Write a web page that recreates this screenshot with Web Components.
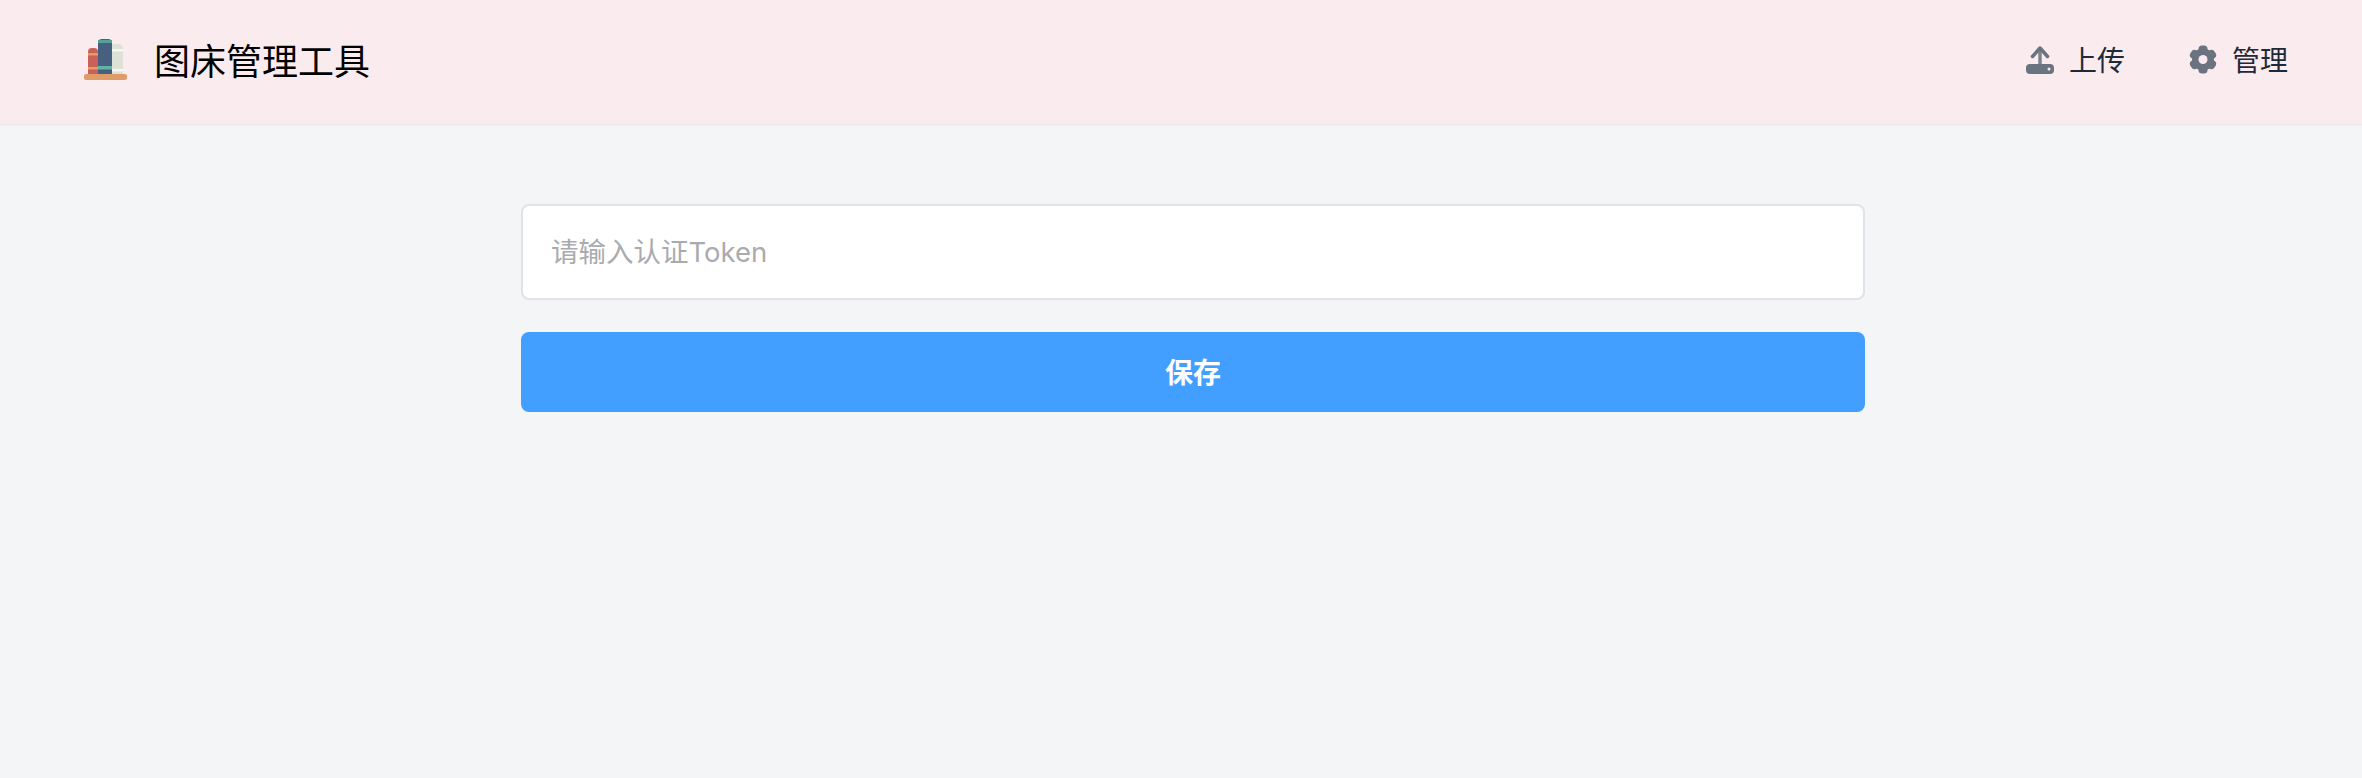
<!DOCTYPE html>
<html lang="zh">
<head>
<meta charset="utf-8">
<title>图床管理工具</title>
<style>
  html, body {
    margin: 0;
    height: 100%;
    background: #f4f5f7;
    font-family: Inter, "Noto Sans CJK SC", sans-serif;
  }
</style>
</head>
<body>
<app-header>
  <nav-link slot="nav" icon="upload">上传</nav-link>
  <nav-link slot="nav" icon="gear">管理</nav-link>
</app-header>
<token-form></token-form>

<script>
const appHeaderTemplate = document.createElement('template');

appHeaderTemplate.innerHTML = `
  <style>
    :host {
      display: flex;
      align-items: center;
      justify-content: space-between;
      box-sizing: border-box;
      height: 125px;
      padding: 0 74px 6px 82px;
      background: #faebee;
      border-bottom: 1px solid #ebe8eb;
      box-shadow: 0 1px 2px rgba(0, 0, 0, .03);
    }
    .brand {
      display: flex;
      align-items: center;
      gap: 26px;
      font-size: 36px;
      color: #000;
    }
    svg { display: block; }
    nav {
      display: flex;
      gap: 64px;
    }
  </style>
  <div class="brand">
    <svg width="46" height="46" viewBox="0 0 46 46">
      <defs>
        <filter id="soft" x="-5%" y="-5%" width="110%" height="110%">
          <feGaussianBlur stdDeviation=".7"/>
        </filter>
      </defs>
      <g filter="url(#soft)">
        <path d="M6 16a4 4 0 0 1 4-4h2a4 4 0 0 1 4 4v22H6z" fill="#c9605a"/>
        <rect x="6" y="17" width="10" height="2.500" fill="#e2a05f"/>
        <rect x="6" y="31" width="10" height="2.500" fill="#e2a05f"/>
        <path d="M16 7a4 4 0 0 1 4-4h6a4 4 0 0 1 4 4v31H16z" fill="#46607f"/>
        <rect x="16" y="4" width="14" height="3" fill="#55a098"/>
        <rect x="16" y="30" width="14" height="3.500" fill="#62b3a6"/>
        <path d="M30 8h6a5 5 0 0 1 5 5v25H30z" fill="#dde1d6"/>
        <rect x="30" y="13" width="11" height="2.500" fill="#f6f7f2"/>
        <rect x="30" y="33" width="11" height="2.500" fill="#f6f7f2"/>
        <rect x="2" y="38" width="43" height="6" rx="2" fill="#e09c68"/>
      </g>
    </svg>
    <span>图床管理工具</span>
  </div>
  <nav><slot name="nav"></slot></nav>
`;

class AppHeader extends HTMLElement {
  constructor() {
    super();
    const shadow = this.attachShadow({ mode: 'open' });
    shadow.append(appHeaderTemplate.content.cloneNode(true));
  }
}

customElements.define('app-header', AppHeader);

const navIcons = {
  upload: `
    <svg width="28" height="29" viewBox="0 0 28 29">
      <path d="M14 4v16" stroke="#7d828d" stroke-width="3.500" fill="none"/>
      <path d="M6.500 11.500L14 3l7.500 8.500" stroke="#6b7280" stroke-width="3.500" stroke-linecap="round" stroke-linejoin="round" fill="none"/>
      <rect x="0" y="19" width="28" height="10" rx="4" fill="#6b7280"/>
      <circle cx="23" cy="24" r="1.500" fill="#faebee"/>
    </svg>`,
  gear: `
    <svg width="28" height="29" viewBox="0 0 28 29" fill="#6b7280">
      <circle cx="14" cy="14.500" r="11"/>
      <rect x="9.500" y=".5" width="9" height="28" rx="3.500"/>
      <rect x="9.500" y=".5" width="9" height="28" rx="3.500" transform="rotate(60 14 14.500)"/>
      <rect x="9.500" y=".5" width="9" height="28" rx="3.500" transform="rotate(120 14 14.500)"/>
      <circle cx="14" cy="14.500" r="4.500" fill="#faebee"/>
    </svg>`,
};

class NavLink extends HTMLElement {
  constructor() {
    super();
    const shadow = this.attachShadow({ mode: 'open' });
    const icon = navIcons[this.getAttribute('icon')];
    shadow.innerHTML = `
      <style>
        :host {
          display: flex;
          align-items: center;
          gap: 15px;
          font-size: 28px;
          color: #1f2937;
        }
        svg { display: block; }
      </style>
      ${icon}
      <span><slot></slot></span>
    `;
  }
}

customElements.define('nav-link', NavLink);

const tokenFormTemplate = document.createElement('template');

tokenFormTemplate.innerHTML = `
  <style>
    :host {
      display: flex;
      flex-direction: column;
      gap: 32px;
      box-sizing: border-box;
      width: 1344px;
      margin: 79px 0 0 521px;
    }
    input {
      box-sizing: border-box;
      width: 100%;
      height: 96px;
      padding: 0 28px;
      background: #fff;
      border: 2px solid #e0e2e6;
      border-radius: 8px;
      outline: none;
      font: inherit;
      font-size: 27.500px;
      color: #1f2937;
    }
    input::placeholder {
      color: #a9abae;
      opacity: 1;
    }
    button {
      display: block;
      width: 100%;
      height: 80px;
      padding: 0 0 3px;
      background: #429fff;
      border: 0;
      border-radius: 8px;
      font: inherit;
      font-size: 28px;
      font-weight: 700;
      color: #fff;
    }
  </style>
  <input type="text" placeholder="请输入认证Token" />
  <button type="button">保存</button>
`;

class TokenForm extends HTMLElement {
  constructor() {
    super();
    const shadow = this.attachShadow({ mode: 'open' });
    shadow.append(tokenFormTemplate.content.cloneNode(true));
  }
}

customElements.define('token-form', TokenForm);
</script>
</body>
</html>
